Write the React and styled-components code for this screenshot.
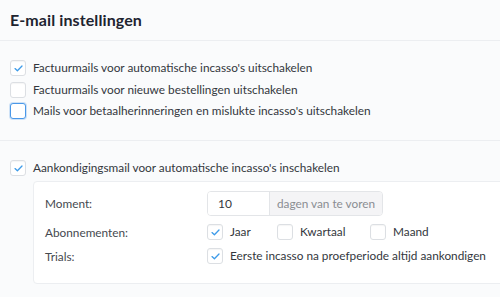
import React from 'react';
import styled, { createGlobalStyle } from 'styled-components';

const GlobalStyle = createGlobalStyle`
  html, body {
    margin: 0;
    padding: 0;
    background: #fafbfc;
  }
  body {
    font-family: Lato, "Open Sans", sans-serif;
    color: #33373d;
  }
`;

const Page = styled.div`
  width: 500px;
  height: 297px;
  overflow: hidden;
  background: #fafbfc;
`;

const Header = styled.div`
  height: 41px;
  padding: 0 10px 1px;
  display: flex;
  align-items: center;
  border-bottom: 1px solid #eceef1;
  box-sizing: border-box;
`;

const Title = styled.h1`
  margin: 0;
  font-size: 16px;
  font-weight: 700;
  color: #1e2430;
  letter-spacing: 0.1px;
`;

const Section = styled.div`
  padding: ${(p) => p.$pad || '18px 0 21px 10px'};
  border-bottom: ${(p) => (p.$last ? 'none' : '1px solid #eceef1')};
  display: flex;
  flex-direction: column;
  gap: ${(p) => p.$gap || '5px'};
`;

const Option = styled.label`
  display: flex;
  align-items: center;
  gap: 7px;
  font-size: 11.8px;
  line-height: 16px;
  color: #33373d;
  white-space: nowrap;
`;

const Box = styled.span`
  width: 16px;
  height: 16px;
  box-sizing: border-box;
  flex: none;
  border: 1px solid ${(p) => (p.$focus ? '#4a98e8' : '#dcdfe3')};
  border-radius: 3px;
  background: #fff;
  box-shadow: ${(p) => (p.$focus ? '0 0 0 1px rgba(74,152,232,0.25)' : 'inset 0 1px 1px rgba(0,0,0,0.04)')};
  display: flex;
  align-items: center;
  justify-content: center;
`;

const Check = () => (
  <svg width="9" height="7" viewBox="0 0 9 7">
    <path d="M1 3.6 L3.4 5.8 L8 1" fill="none" stroke="#3d9be9" strokeWidth="1.3" strokeLinecap="round" strokeLinejoin="round" />
  </svg>
);

const Checkbox = ({ checked, focus, children }) => (
  <Option>
    <Box $focus={focus}>{checked && <Check />}</Box>
    {children}
  </Option>
);

const Panel = styled.div`
  margin: 0 -30px 0 23px;
  background: #fff;
  border: 1px solid #eceef1;
  border-radius: 4px;
  padding: 9px 12px 19px 11px;
  display: grid;
  grid-template-columns: 162px 1fr;
  row-gap: 8px;
  align-items: center;
`;

const Label = styled.div`
  font-size: 11.8px;
  color: #45494f;
`;

const InputGroup = styled.div`
  display: flex;
  width: 176px;
  height: 25px;
  border: 1px solid #e3e5e8;
  border-radius: 4px;
  overflow: hidden;
  box-sizing: border-box;
`;

const Input = styled.div`
  width: 62px;
  box-sizing: border-box;
  background: #fff;
  padding-left: 10px;
  display: flex;
  align-items: center;
  font-size: 12px;
  color: #33373d;
  border-right: 1px solid #e3e5e8;
`;

const Addon = styled.div`
  flex: 1;
  background: #f4f4f6;
  display: flex;
  align-items: center;
  justify-content: center;
  font-size: 11.8px;
  color: #8a8d92;
  white-space: nowrap;
`;

const Choices = styled.div`
  display: flex;
`;

const Choice = styled.div`
  width: ${(p) => p.$w}px;
`;

export default function App() {
  return (
    <Page>
      <GlobalStyle />
      <Header>
        <Title>E-mail instellingen</Title>
      </Header>
      <Section $pad="19px 0 21px 10px" $gap="5.5px">
        <Checkbox checked>Factuurmails voor automatische incasso's uitschakelen</Checkbox>
        <Checkbox>Factuurmails voor nieuwe bestellingen uitschakelen</Checkbox>
        <Checkbox focus>Mails voor betaalherinneringen en mislukte incasso's uitschakelen</Checkbox>
      </Section>
      <Section $pad="19px 0 0 10px" $last>
        <Checkbox checked>Aankondigingsmail voor automatische incasso's inschakelen</Checkbox>
        <Panel>
          <Label>Moment:</Label>
          <InputGroup>
            <Input>10</Input>
            <Addon>dagen van te voren</Addon>
          </InputGroup>
          <Label>Abonnementen:</Label>
          <Choices>
            <Choice $w={70}><Checkbox checked>Jaar</Checkbox></Choice>
            <Choice $w={93}><Checkbox>Kwartaal</Checkbox></Choice>
            <Choice $w={80}><Checkbox>Maand</Checkbox></Choice>
          </Choices>
          <Label>Trials:</Label>
          <Checkbox checked>Eerste incasso na proefperiode altijd aankondigen</Checkbox>
        </Panel>
      </Section>
    </Page>
  );
}
